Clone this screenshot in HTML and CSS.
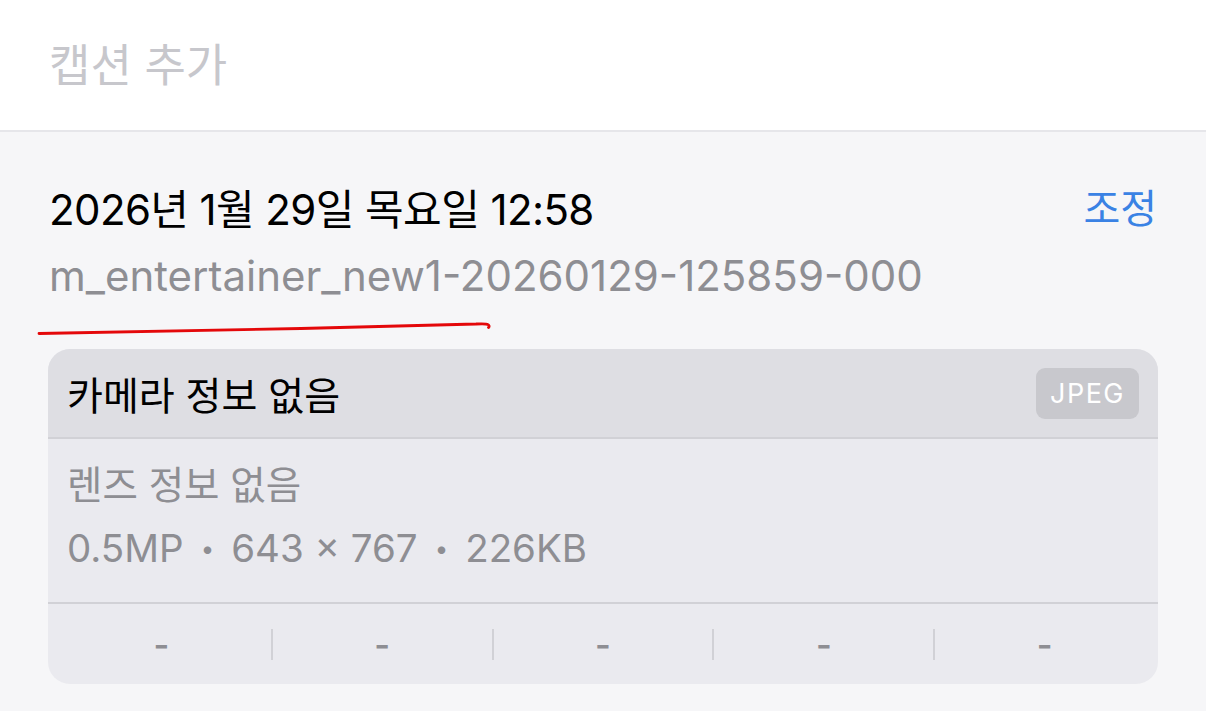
FILE: index.html
```html
<!DOCTYPE html>
<html lang="ko">
<head>
    <meta charset="UTF-8">
    <meta name="viewport" content="width=device-width, initial-scale=1.0">
    <title>사진 정보</title>
    <link rel="stylesheet" href="styles.css">
</head>
<body>
    <!-- Caption -->
    <div class="caption">캡션 추가</div>

    <!-- Photo info -->
    <section class="info">
        <div class="info-head">
            <div class="date">2026년 1월 29일 목요일 12:58</div>
            <a class="adjust" href="#">조정</a>
        </div>
        <div class="filename">m_entertainer_new1-20260129-125859-000</div>

        <svg class="scribble" width="470" height="24" viewBox="0 0 470 24">
            <path d="M3 17.5 C 120 16, 300 12, 440 8 Q 450 7.4 452 8.6 Q 454 9.8 452.5 11.5" fill="none" stroke="#e4080a" stroke-width="2.8" stroke-linecap="round"/>
        </svg>

        <div class="card">
            <div class="card-head">
                <span class="camera">카메라 정보 없음</span>
                <span class="badge">JPEG</span>
            </div>
            <div class="card-body">
                <div class="lens">렌즈 정보 없음</div>
                <div class="specs">0.5MP<span class="dot">•</span>643 × 767<span class="dot">•</span>226KB</div>
            </div>
            <div class="exif">
                <span class="exif-cell">-</span>
                <span class="exif-cell">-</span>
                <span class="exif-cell">-</span>
                <span class="exif-cell">-</span>
                <span class="exif-cell">-</span>
            </div>
        </div>
    </section>
</body>
</html>
```

FILE: styles.css
```css
* {
    margin: 0;
    padding: 0;
    box-sizing: border-box;
    font-family: Inter, "Noto Sans CJK KR", sans-serif;
}

body {
    background-color: #f6f6f8;
    color: #000;
    width: 1206px;
    height: 711px;
    overflow: hidden;
}

/* Caption */
.caption {
    height: 132px;
    padding: 0 0 6px 49px;
    display: flex;
    align-items: center;
    background-color: #fff;
    border-bottom: 2px solid #e6e6ea;
    color: #c7c7cc;
    font-size: 45px;
}

/* Info section */
.info {
    position: relative;
    padding: 44px 48px 0 48px;
}

.info-head {
    height: 60px;
    display: flex;
    justify-content: space-between;
    align-items: center;
}

.date {
    font-size: 42px;
    letter-spacing: -0.6px;
    padding-left: 1px;
}

.adjust {
    color: #3a82e4;
    font-size: 40px;
    text-decoration: none;
    padding-right: 1px;
}

.filename {
    height: 60px;
    margin-top: 9px;
    display: flex;
    align-items: center;
    padding-left: 1px;
    color: #8e8e93;
    font-size: 42px;
}

.scribble {
    position: absolute;
    left: 36px;
    top: 184px;
}

/* Card */
.card {
    margin-top: 44px;
    background-color: #eaeaef;
    border-radius: 22px;
    overflow: hidden;
}

.card-head {
    height: 90px;
    padding: 0 19px;
    display: flex;
    justify-content: space-between;
    align-items: center;
    background-color: #dedee3;
    border-bottom: 2px solid #d1d1d6;
}

.camera {
    font-size: 39px;
}

.badge {
    height: 51px;
    width: 103px;
    display: flex;
    align-items: center;
    justify-content: center;
    background-color: #c8c8cd;
    border-radius: 9px;
    color: #fff;
    font-size: 27px;
    letter-spacing: 1.5px;
}

.card-body {
    padding: 13px 19px 24px;
    border-bottom: 2px solid #d1d1d6;
    color: #8e8e93;
}

.lens {
    height: 60px;
    display: flex;
    align-items: center;
    font-size: 38.5px;
}

.specs {
    height: 60px;
    margin-top: 6px;
    display: flex;
    align-items: center;
    font-size: 38.5px;
}

.specs .dot {
    font-size: 24px;
    margin: 0 17px;
}

.exif {
    height: 80px;
    padding: 0 4px;
    display: flex;
    align-items: center;
}

.exif-cell {
    flex: 1;
    height: 31px;
    display: flex;
    align-items: center;
    justify-content: center;
    color: #8e8e93;
    font-size: 34px;
    font-weight: 600;
    border-left: 2px solid #d1d1d6;
}

.exif-cell:first-child {
    border-left: none;
}
```
